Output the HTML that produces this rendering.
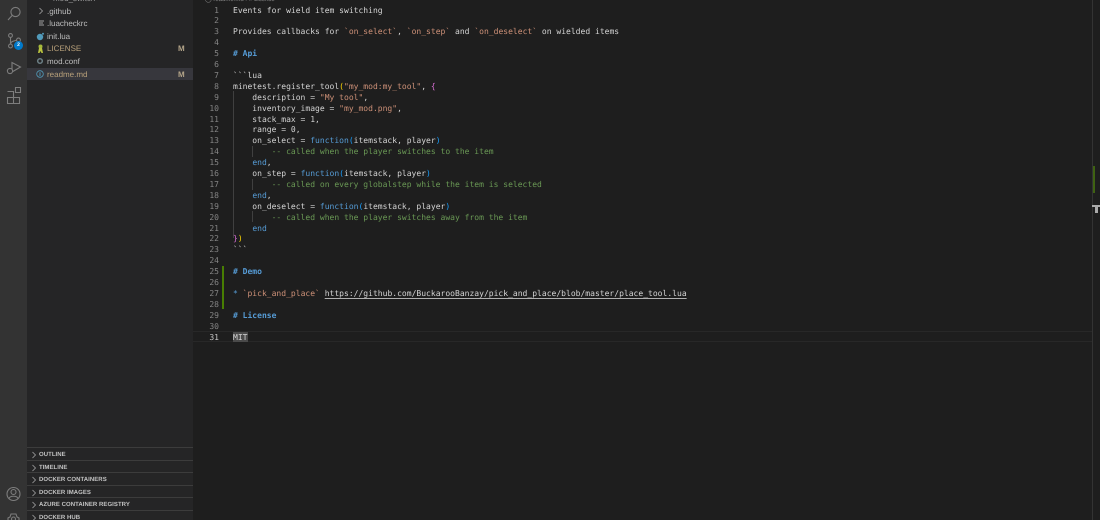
<!DOCTYPE html>
<html><head><meta charset="utf-8">
<style>
html,body{margin:0;padding:0;width:1100px;height:520px;overflow:hidden;background:#1e1e1e}
#root{position:relative;width:1100px;height:520px;overflow:hidden;filter:blur(.35px);text-rendering:geometricPrecision}
.abs{position:absolute}
#act{position:absolute;left:0;top:0;width:27px;height:520px;background:#333333}
#side{position:absolute;left:27px;top:0;width:166px;height:520px;background:#252526;font-family:"Liberation Sans",sans-serif}
.f{position:absolute;left:20px;font-size:8px;line-height:12px;height:12px;color:#bdbdbd;white-space:pre}
.m{position:absolute;left:151px;font-size:8px;line-height:12px;color:#b5a68a;font-weight:bold}
.sec{position:absolute;left:0;width:166px;height:12px;border-top:1px solid #3c3c3c;font-size:6px;font-weight:bold;color:#c4c4c4;line-height:12px;white-space:pre}
.sec span{position:absolute;left:12px;top:0.5px;letter-spacing:.05px}
.sec svg{position:absolute;left:3.5px;top:2.5px}
.ln{position:absolute;left:193px;width:26px;text-align:right;font:8px/11px "DejaVu Sans Mono",monospace;color:#858585}
.c{position:absolute;left:233px;font:8.02px/11px "DejaVu Sans Mono",monospace;color:#d4d4d4;white-space:pre}
.s{color:#ce9178}.h{color:#569cd6;font-weight:bold}.k{color:#569cd6}.g{color:#6a9955}.y{color:#ffd700}.p{color:#da70d6}.b{color:#179fff}
.u{text-decoration:underline;text-decoration-color:#b0b0b0;text-underline-offset:1.5px}
.guide{position:absolute;width:1px;background:#404040}
</style></head><body>
<div id="root">
<div id="act">
<svg class="abs" style="left:0;top:0" width="27" height="520" fill="none" stroke="#7d7d7d" stroke-width="1.1">
<circle cx="15.500" cy="12" r="4.600"/><path d="M12.200 15.400 L8 20"/>
<circle cx="10.500" cy="35.500" r="1.900"/><circle cx="10.500" cy="46" r="1.900"/><circle cx="18.500" cy="40" r="1.900"/><path d="M10.500 37.500V44M16.600 40.200C13.500 41 11 41.500 10.500 43.500"/>
<path d="M12 62.500V72L20.500 67Z"/><circle cx="10" cy="71" r="2.600" fill="#333"/>
<path d="M7.500 91.500h6v6M7.500 97.500h6v6h-6zM13.500 97.500h6v6h-6zM15.500 87.500h5v5h-5z"/>
<circle cx="13.500" cy="494" r="6.500"/><circle cx="13.500" cy="492" r="2.500"/><path d="M9 498.500c1-3 8-3 9 0"/>
<path d="M8 520l0-2 2-1 1-3h5l1 3 2 1 0 2"/><circle cx="13.500" cy="519" r="2"/>
</svg>
<div class="abs" style="left:14px;top:41px;width:9px;height:9px;border-radius:50%;background:#007acc;color:#fff;font:bold 5px/9px 'Liberation Sans',sans-serif;text-align:center">2</div>
</div>
<div id="side">
<div class="abs" style="left:0;top:68px;width:166px;height:12px;background:#37373d"></div>
<div class="f" style="left:26px;top:-7px;color:#999">mod_switch</div>
<svg class="abs" style="left:10.500px;top:7px" width="6" height="8" fill="none" stroke="#b0b0b0" stroke-width=".7"><path d="M1.500 1L4.500 4 1.500 7"/></svg>
<div class="f" style="top:5.500px">.github</div>
<svg class="abs" style="left:11px;top:20px" width="7" height="7"><path d="M1 1h5M1 3h4M1 5h5" stroke="#a0a0a0" stroke-width="1"/></svg>
<div class="f" style="top:18px">.luacheckrc</div>
<svg class="abs" style="left:9px;top:31.500px" width="9" height="9"><circle cx="4" cy="5" r="3.200" fill="#519aba"/><circle cx="7" cy="1.800" r="1" fill="#519aba"/></svg>
<div class="f" style="top:30.500px">init.lua</div>
<svg class="abs" style="left:9px;top:44px" width="9" height="10"><circle cx="4.500" cy="2.500" r="2" fill="#a5b83c"/><path d="M3 4h3l1 5H5.500L4.500 7 3.500 9H2Z" fill="#b9c23e"/></svg>
<div class="f" style="top:43px;color:#b8a07a">LICENSE</div>
<div class="m" style="top:43px">M</div>
<svg class="abs" style="left:9px;top:57px" width="8" height="8"><circle cx="4" cy="4" r="2.300" fill="none" stroke="#6d8086" stroke-width="1.500"/></svg>
<div class="f" style="top:55.500px">mod.conf</div>
<svg class="abs" style="left:9px;top:70px" width="8" height="8"><circle cx="4" cy="4" r="3.300" fill="none" stroke="#519aba" stroke-width=".8"/><path d="M4 2.200V6" stroke="#519aba" stroke-width=".9"/></svg>
<div class="f" style="top:68.500px;color:#b8a07a">readme.md</div>
<div class="m" style="top:68.500px">M</div>
<div class="sec" style="top:447px"><svg width="6" height="8" fill="none" stroke="#b0b0b0" stroke-width=".7"><path d="M1.500 1L4.500 4 1.500 7"/></svg><span>OUTLINE</span></div>
<div class="sec" style="top:460px"><svg width="6" height="8" fill="none" stroke="#b0b0b0" stroke-width=".7"><path d="M1.500 1L4.500 4 1.500 7"/></svg><span>TIMELINE</span></div>
<div class="sec" style="top:472px"><svg width="6" height="8" fill="none" stroke="#b0b0b0" stroke-width=".7"><path d="M1.500 1L4.500 4 1.500 7"/></svg><span>DOCKER CONTAINERS</span></div>
<div class="sec" style="top:485px"><svg width="6" height="8" fill="none" stroke="#b0b0b0" stroke-width=".7"><path d="M1.500 1L4.500 4 1.500 7"/></svg><span>DOCKER IMAGES</span></div>
<div class="sec" style="top:497px"><svg width="6" height="8" fill="none" stroke="#b0b0b0" stroke-width=".7"><path d="M1.500 1L4.500 4 1.500 7"/></svg><span>AZURE CONTAINER REGISTRY</span></div>
<div class="sec" style="top:510px"><svg width="6" height="8" fill="none" stroke="#b0b0b0" stroke-width=".7"><path d="M1.500 1L4.500 4 1.500 7"/></svg><span>DOCKER HUB</span></div>
</div>
<div class="abs" style="left:193px;top:331px;width:899px;height:11px;box-sizing:border-box;border-top:1px solid #282828;border-bottom:1px solid #282828"></div>
<div class="abs" style="left:233px;top:331.500px;width:14.500px;height:10.500px;background:#4a4a4a"></div>
<div class="abs" style="left:222px;top:266px;width:1.500px;height:43px;background:#487e02"></div>
<div class="guide" style="left:233px;top:91px;height:147px"></div>
<div class="guide" style="left:252px;top:146px;height:11px"></div>
<div class="guide" style="left:252px;top:179px;height:11px"></div>
<div class="guide" style="left:252px;top:211px;height:11px"></div>
<div class="abs" style="left:205px;top:-3px;font:6px/6px 'Liberation Sans',sans-serif;color:#8a8a8a;white-space:pre">◯ readme.md › # License</div>
<div class="ln" style="top:4.500px">1</div><div class="c" style="top:4.500px">Events for wield item switching</div>
<div class="ln" style="top:15.400px">2</div>
<div class="ln" style="top:26.300px">3</div><div class="c" style="top:26.300px">Provides callbacks for <span class="s">&#96;on_select&#96;</span>, <span class="s">&#96;on_step&#96;</span> and <span class="s">&#96;on_deselect&#96;</span> on wielded items</div>
<div class="ln" style="top:37.200px">4</div>
<div class="ln" style="top:48.100px">5</div><div class="c h" style="top:48.100px"># Api</div>
<div class="ln" style="top:59px">6</div>
<div class="ln" style="top:69.900px">7</div><div class="c" style="top:69.900px">&#96;&#96;&#96;lua</div>
<div class="ln" style="top:80.800px">8</div><div class="c" style="top:80.800px">minetest.register_tool<span class="y">(</span><span class="s">"my_mod:my_tool"</span>, <span class="p">{</span></div>
<div class="ln" style="top:91.700px">9</div><div class="c" style="top:91.700px">    description = <span class="s">"My tool"</span>,</div>
<div class="ln" style="top:102.600px">10</div><div class="c" style="top:102.600px">    inventory_image = <span class="s">"my_mod.png"</span>,</div>
<div class="ln" style="top:113.500px">11</div><div class="c" style="top:113.500px">    stack_max = 1,</div>
<div class="ln" style="top:124.400px">12</div><div class="c" style="top:124.400px">    range = 0,</div>
<div class="ln" style="top:135.300px">13</div><div class="c" style="top:135.300px">    on_select = <span class="k">function</span><span class="b">(</span>itemstack, player<span class="b">)</span></div>
<div class="ln" style="top:146.200px">14</div><div class="c g" style="top:146.200px">        -- called when the player switches to the item</div>
<div class="ln" style="top:157.100px">15</div><div class="c" style="top:157.100px">    <span class="k">end</span>,</div>
<div class="ln" style="top:168px">16</div><div class="c" style="top:168px">    on_step = <span class="k">function</span><span class="b">(</span>itemstack, player<span class="b">)</span></div>
<div class="ln" style="top:178.900px">17</div><div class="c g" style="top:178.900px">        -- called on every globalstep while the item is selected</div>
<div class="ln" style="top:189.800px">18</div><div class="c" style="top:189.800px">    <span class="k">end</span>,</div>
<div class="ln" style="top:200.700px">19</div><div class="c" style="top:200.700px">    on_deselect = <span class="k">function</span><span class="b">(</span>itemstack, player<span class="b">)</span></div>
<div class="ln" style="top:211.600px">20</div><div class="c g" style="top:211.600px">        -- called when the player switches away from the item</div>
<div class="ln" style="top:222.500px">21</div><div class="c" style="top:222.500px">    <span class="k">end</span></div>
<div class="ln" style="top:233.400px">22</div><div class="c" style="top:233.400px"><span class="p">}</span><span class="y">)</span></div>
<div class="ln" style="top:244.300px">23</div><div class="c" style="top:244.300px">&#96;&#96;&#96;</div>
<div class="ln" style="top:255.200px">24</div>
<div class="ln" style="top:266.100px">25</div><div class="c h" style="top:266.100px"># Demo</div>
<div class="ln" style="top:277px">26</div>
<div class="ln" style="top:287.900px">27</div><div class="c" style="top:287.900px"><span class="k">*</span> <span class="s">&#96;pick_and_place&#96;</span> <span class="u">https://github.com/BuckarooBanzay/pick_and_place/blob/master/place_tool.lua</span></div>
<div class="ln" style="top:298.800px">28</div>
<div class="ln" style="top:309.700px">29</div><div class="c h" style="top:309.700px"># License</div>
<div class="ln" style="top:320.600px">30</div>
<div class="ln" style="top:331.500px;color:#c6c6c6">31</div><div class="c" style="top:331.500px">MIT</div>
<div class="abs" style="left:1092px;top:0;width:1px;height:520px;background:#333"></div>
<div class="abs" style="left:1092.500px;top:166px;width:2.500px;height:27px;background:#3f6212"></div>
<div class="abs" style="left:1092px;top:205px;width:8px;height:1.500px;background:#aaa"></div>
<div class="abs" style="left:1095px;top:206px;width:3px;height:7px;background:#aaa"></div>
</div>
</body></html>
